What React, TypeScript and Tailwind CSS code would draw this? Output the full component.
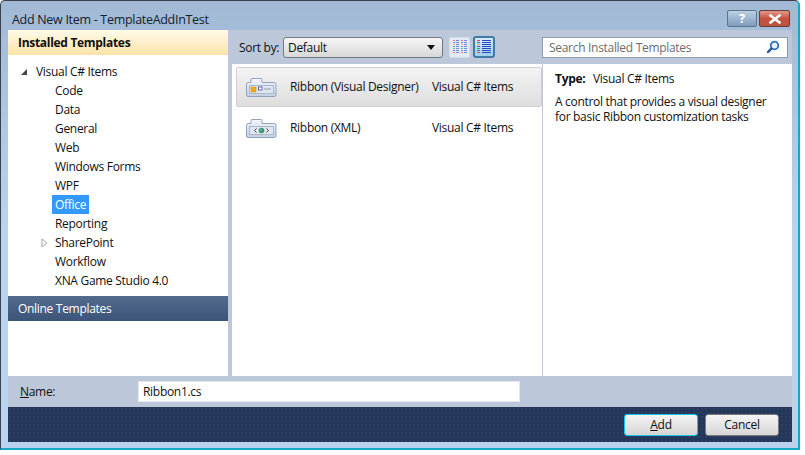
import React from 'react';

const treeItems = ['Code', 'Data', 'General', 'Web', 'Windows Forms', 'WPF', 'Office', 'Reporting', 'SharePoint', 'Workflow', 'XNA Game Studio 4.0'];

function FolderIcon({ xml }: { xml?: boolean }) {
  return (
    <svg width="33" height="21" viewBox="0 0 33 21">
      <defs>
        <linearGradient id={xml ? 'fx' : 'fd'} x1="0" y1="0" x2="0" y2="1">
          <stop offset="0" stopColor="#f4f7fb" />
          <stop offset="1" stopColor="#c3cfe0" />
        </linearGradient>
      </defs>
      <path d="M1.5 18V7.500q0-2 2-2h2.500V2.500q0-1 1-1h9q1 0 1 1v3h12q2 0 2 2V18q0 1.500-1.500 1.500H3q-1.500 0-1.500-1.500z" fill={`url(#${xml ? 'fx' : 'fd'})`} stroke="#8fa3bf" />
      <rect x="4.500" y="8.500" width="24" height="8" fill="#dfe6f0" stroke="#a9b8cd" />
      {xml ? (
        <g>
          <circle cx="16.500" cy="12.500" r="2.800" fill="#3f9a5a" />
          <circle cx="15.800" cy="11.800" r="1.200" fill="#5aa3df" />
          <path d="M11.500 10.500l-2 2 2 2M21.500 10.500l2 2-2 2" fill="none" stroke="#3a4560" strokeWidth="1" />
        </g>
      ) : (
        <g>
          <rect x="6" y="10" width="5" height="5" fill="#f2a71e" stroke="#d98d10" strokeWidth="0.500" />
          <rect x="13.500" y="10" width="3.500" height="3" fill="#fff" stroke="#3c46b0" strokeWidth="0.800" />
          <rect x="19" y="11.500" width="7" height="1" fill="#8a97ad" />
        </g>
      )}
    </svg>
  );
}

function ViewIcon({ columns }: { columns: number }) {
  const colors = ['#e2483d', '#3a63d8', '#e8b01f', '#3a63d8', '#41a64a', '#3a63d8', '#e2483d'];
  return (
    <svg width="14" height="16" viewBox="0 0 14 16">
      {colors.map((c, i) =>
        columns === 2 ? (
          <g key={i} opacity="0.7">
            <rect x="0" y={i * 2 + 1} width="2" height="1" fill={c} />
            <rect x="3" y={i * 2 + 1} width="3" height="1" fill="#3a63d8" />
            <rect x="8" y={i * 2 + 1} width="2" height="1" fill={c} />
            <rect x="11" y={i * 2 + 1} width="3" height="1" fill="#3a63d8" />
          </g>
        ) : (
          <g key={i}>
            <rect x="0" y={i * 2 + 1} width="3" height="1" fill={c} />
            <rect x="5" y={i * 2 + 1} width="9" height="1" fill="#2f45c8" />
          </g>
        )
      )}
    </svg>
  );
}

function TemplateRow({ name, xml, selected }: { name: string; xml?: boolean; selected?: boolean }) {
  return (
    <div className={`flex items-center h-[40px] w-[306px] pl-[8px] rounded-[2px] border ${selected ? 'border-[#cfcfcf] bg-gradient-to-b from-[#f3f3f3] to-[#dedede]' : 'border-transparent mt-[1px]'}`}>
      <div className="w-[45px] flex"><FolderIcon xml={xml} /></div>
      <div className="w-[142px]">{name}</div>
      <div>Visual C# Items</div>
    </div>
  );
}

export default function App() {
  return (
    <div className="w-[805px] h-[455px] bg-white text-[12px] text-[#101010] font-['Open_Sans','Noto_Sans',sans-serif] tracking-[-0.3px]">
      <div className="w-[800px] h-[450px] rounded-t-[5px] border-t border-l border-[#39424e] border-r-2 border-r-[#17a9c4] border-b-2 border-b-[#17a9c4] bg-gradient-to-b from-[#a1b9d4] via-[#b9d3ee] to-[#b9d3ee] flex flex-col">
        <div className="h-[29px] shrink-0 flex pl-[11px] pr-[8px] justify-between">
          <div className="pt-[10px] text-[12.500px] leading-[17px] text-[#15202e]">Add New Item - TemplateAddInTest</div>
          <div className="flex gap-[2px] pt-[9px]">
            <div className="w-[30px] h-[17px] rounded-[2px] border border-[#5f7488] bg-gradient-to-b from-[#bcd0e4] to-[#7f9cbc] flex items-center justify-center text-white font-bold text-[13px] leading-none">?</div>
            <div className="w-[31px] h-[17px] rounded-[2px] border border-[#6a3a35] bg-gradient-to-b from-[#e09a8c] via-[#c8503e] to-[#b8553f] flex items-center justify-center">
              <svg width="14" height="10" viewBox="0 0 14 10">
                <path d="M2.500 1.500L11.500 8.500M11.500 1.500L2.500 8.500" stroke="#fff" strokeWidth="2.600" strokeLinecap="square" />
              </svg>
            </div>
          </div>
        </div>

        <div className="ml-[7px] w-[784px] h-[412px] bg-[#bcc8d9] flex flex-col">
          <div className="flex h-[346px]">
            <div className="w-[220px] bg-white flex flex-col">
              <div className="h-[25px] flex items-center pl-[10px] font-bold bg-gradient-to-b from-[#fffbea] to-[#fce3a8]">Installed Templates</div>
              <div className="pt-[7px]">
                <div className="h-[19px] flex items-center pl-[12px] pt-[1px]">
                  <svg width="8" height="8" viewBox="0 0 8 8" className="mr-[8px]"><path d="M7 1v6H1z" fill="#444" /></svg>
                  Visual C# Items
                </div>
                {treeItems.map((item) => (
                  <div key={item} className="h-[19px] flex items-center pl-[44px] relative">
                    {item === 'SharePoint' && (
                      <svg width="7" height="10" viewBox="0 0 7 10" className="absolute left-[33px] top-[5px]"><path d="M1 1l5 4-5 4z" fill="#fff" stroke="#a8a8a8" /></svg>
                    )}
                    <span className={`px-[3px] h-[19px] leading-[19px] ${item === 'Office' ? 'bg-[#3399ff] text-white' : ''}`}>{item}</span>
                  </div>
                ))}
              </div>
              <div className="mt-[6px] h-[25px] flex items-center pl-[10px] text-white bg-gradient-to-b from-[#536c8e] to-[#3c5478]">Online Templates</div>
            </div>

            <div className="flex-1 flex flex-col">
              <div className="h-[34px] flex items-center pl-[11px]">
                <span className="w-[44px] pt-[1px]">Sort by:</span>
                <div className="w-[160px] h-[21px] rounded-[3px] border border-[#6f7a86] bg-gradient-to-b from-[#f6f6f6] to-[#d8d8d8] flex items-center justify-between pl-[4px] pr-[7px]">
                  <span className="pt-[1px]">Default</span>
                  <svg width="8" height="5" viewBox="0 0 8 5"><path d="M0 0h8L4 5z" fill="#111" /></svg>
                </div>
                <div className="ml-[6px] w-[21px] h-[21px] rounded-[2px] border border-[#d3dceb] bg-[#e4eaf3] flex items-center justify-center"><ViewIcon columns={2} /></div>
                <div className="ml-[3px] w-[22px] h-[22px] rounded-[3px] border-2 border-[#3f7ba6] bg-gradient-to-b from-[#d5ecfb] to-[#9dd0f0] flex items-center justify-center"><ViewIcon columns={1} /></div>
                <div className="ml-auto mr-[4px] w-[246px] h-[21px] bg-white border border-[#8e9cad] flex items-center justify-between pl-[6px] pr-[7px] text-[#6d6d6d]">
                  <span className="pt-[1px]">Search Installed Templates</span>
                  <svg width="14" height="14" viewBox="0 0 14 14">
                    <circle cx="8.500" cy="5.500" r="3.800" fill="#e6f2fb" stroke="#2a6fb8" strokeWidth="1.800" />
                    <path d="M5.500 8.500L2 12" stroke="#1d4f96" strokeWidth="2.400" strokeLinecap="round" />
                  </svg>
                </div>
              </div>
              <div className="flex-1 flex">
                <div className="ml-[4px] w-[310px] bg-white pt-[3px] pl-[4px]">
                  <TemplateRow name="Ribbon (Visual Designer)" selected />
                  <TemplateRow name="Ribbon (XML)" xml />
                </div>
                <div className="flex-1 ml-[1px] bg-white pl-[12px] pt-[6px]">
                  <div className="flex h-[17px] items-center">
                    <span className="font-bold w-[38px]">Type:</span>
                    Visual C# Items
                  </div>
                  <div className="mt-[7px] leading-[15px]">
                    A control that provides a visual designer<br />
                    for basic Ribbon customization tasks
                  </div>
                </div>
              </div>
            </div>
          </div>

          <div className="h-[31px] flex items-center pl-[12px]">
            <span className="w-[118px]"><span className="underline">N</span>ame:</span>
            <div className="w-[382px] h-[21px] bg-white border border-[#e4e9f0] flex items-center pl-[4px]">Ribbon1.cs</div>
          </div>

          <div className="flex-1 flex items-center justify-end gap-[7px] pr-[13px] bg-[#24375a] bg-[radial-gradient(#2c4163_0.7px,transparent_0.8px)] bg-[length:4px_4px]">
            <div className="w-[74px] h-[22px] rounded-[3px] border border-[#18c3e8] bg-gradient-to-b from-[#f4f4f4] to-[#d6d6d6] flex items-center justify-center"><span><span className="underline">A</span>dd</span></div>
            <div className="w-[74px] h-[22px] rounded-[3px] border border-[#77797c] bg-gradient-to-b from-[#f4f4f4] to-[#d6d6d6] flex items-center justify-center">Cancel</div>
          </div>
        </div>
      </div>
    </div>
  );
}
